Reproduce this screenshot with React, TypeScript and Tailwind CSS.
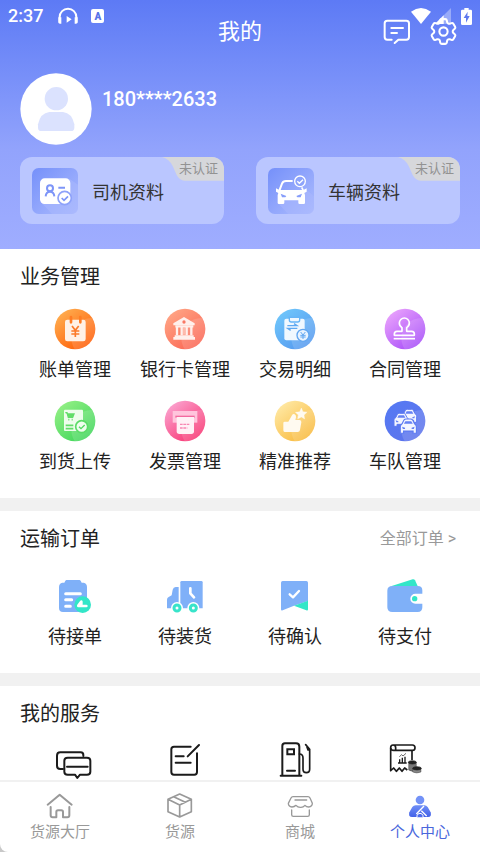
import { ReactNode } from "react";
import { HiOutlineCog6Tooth } from "react-icons/hi2";

interface MenuItem {
  label: string;
  icon: ReactNode;
}

const Disc = ({ id, from, to, children }: { id: string; from: string; to: string; children: ReactNode }) => (
  <svg viewBox="0 0 126 126" className="size-[42px]" aria-hidden="true">
    <defs>
      <linearGradient id={id} x1="0.1" y1="0.1" x2="0.8" y2="0.95">
        <stop offset="0" stopColor={from} />
        <stop offset="1" stopColor={to} />
      </linearGradient>
      <clipPath id={`${id}-clip`}>
        <circle cx="63" cy="63" r="61" />
      </clipPath>
    </defs>
    <circle cx="63" cy="63" r="61" fill={`url(#${id})`} />
    <circle cx="112" cy="90" r="60" fill="#fff" opacity="0.14" clipPath={`url(#${id}-clip)`} />
    {children}
  </svg>
)

const SmallCar = ({ x, y, scale }: { x: number; y: number; scale: number }) => (
  <g transform={`translate(${x} ${y}) scale(${scale})`}>
    <path d="M-22 1C-22-3-20-5-17-7L-12-17Q-10-20-6-20H6Q10-20 12-17L17-7C20-5 22-3 22 1V19H13V13H-13V19H-22Z" fill="#f4f6ff" stroke="#5c7af2" strokeWidth="3" />
    <path d="M-12-7L-8-14H8L12-7Z" fill="#6481f3" />
    <path d="M-17 1L-9 4V7H-15ZM17 1L9 4V7H15Z" fill="#6481f3" />
  </g>
)

const business: MenuItem[] = [
  {
    label: "账单管理",
    icon: (
      <Disc id="bill" from="#ffae50" to="#ff5c05">
        <rect x="33" y="35" width="62" height="65" rx="7" fill="#fff1e6" />
        <path d="M51 27V43M79 27V43" stroke="#ff7d24" strokeWidth="8" strokeLinecap="round" />
        <path d="M54 54L64 67L74 54M64 67V87M52 69H76M52 78H76" fill="none" stroke="#fb7a2a" strokeWidth="5" />
      </Disc>
    )
  },
  {
    label: "银行卡管理",
    icon: (
      <Disc id="bank" from="#ffa585" to="#fb6553">
        <path d="M60 27L92 46V52H28V46Z" fill="#fff0ec" strokeLinejoin="round" />
        <circle cx="60" cy="42" r="5" fill="#f97864" />
        <path d="M34 55H88M39 55V82M53 55V82M68 55V82M82 55V82" stroke="#fff0ec" strokeWidth="7" />
        <path d="M60 58V80" stroke="#ffd0c4" strokeWidth="4" />
        <path d="M32 82H89V87H93V95H28V87H32Z" fill="#fff0ec" />
      </Disc>
    )
  },
  {
    label: "交易明细",
    icon: (
      <Disc id="trade" from="#6fc6fb" to="#5599ef">
        <rect x="31" y="32" width="61" height="65" rx="6" fill="#f0f8ff" />
        <path d="M46 28H77V36Q77 42 71 42H52Q46 42 46 36Z" fill="#eef7ff" stroke="#65b4f6" strokeWidth="4" />
        <path d="M40 53H69L60 47M70 61H41L50 67" fill="none" stroke="#5fa9f2" strokeWidth="4" />
        <circle cx="87" cy="82" r="18" fill="#e8f3ff" stroke="#62a7f1" strokeWidth="4" />
        <path d="M80 72L87 81L94 72M87 81V93M79 82H95M79 87H95" fill="none" stroke="#62a7f1" strokeWidth="3" />
      </Disc>
    )
  },
  {
    label: "合同管理",
    icon: (
      <Disc id="contract" from="#e9a2fc" to="#a74cf9">
        <path d="M54 59Q46 54 46 45A15 15 0 0 1 76 45Q76 54 68 59V70H83Q91 70 91 78V82H31V78Q31 70 39 70H54Z" fill="none" stroke="#fff" strokeWidth="5" strokeLinejoin="round" />
        <path d="M29 92H93" stroke="#fff" strokeWidth="5" />
      </Disc>
    )
  },
  {
    label: "到货上传",
    icon: (
      <Disc id="arrival" from="#93ef85" to="#3fd65a">
        <rect x="30" y="29" width="57" height="64" rx="3" fill="#eefdec" />
        <path d="M34 38H39L43 52H56L60 42H41" fill="#62dd68" stroke="#62dd68" strokeWidth="4" />
        <path d="M43 59H46M53 59H56" stroke="#62dd68" strokeWidth="5" />
        <path d="M35 76H58M35 86H58" stroke="#62dd68" strokeWidth="5" />
        <circle cx="83" cy="80" r="18" fill="#effeee" stroke="#5bdc67" strokeWidth="5" />
        <path d="M75 80L81 86L92 75" fill="none" stroke="#52d861" strokeWidth="4" />
      </Disc>
    )
  },
  {
    label: "发票管理",
    icon: (
      <Disc id="invoice" from="#fba3cf" to="#f83371">
        <path d="M26 33H100V68H26Z" fill="#ffc5dc" />
        <path d="M34 50H92" stroke="#f3699f" strokeWidth="6" />
        <path d="M38 51H90V94Q90 102 82 102H46Q38 102 38 94Z" fill="#fff1f6" />
        <path d="M48 73H78M48 84H70" stroke="#f787b2" strokeWidth="4" strokeDasharray="8 2" />
      </Disc>
    )
  },
  {
    label: "精准推荐",
    icon: (
      <Disc id="recommend" from="#ffe9a5" to="#f9b93b">
        <path d="M32 65H43L54 46Q57 40 62 43Q67 46 66 52L64 60H77Q83 61 82 67L78 90Q77 96 71 96H32Q28 96 28 91V69Q28 65 32 65Z" fill="#fffaf0" />
        <path d="M82 24L87 35L99 37L90 45L92 57L82 51L71 57L73 45L64 37L77 35Z" fill="#fffaf0" stroke="#fffaf0" strokeLinejoin="round" />
      </Disc>
    )
  },
  {
    label: "车队管理",
    icon: (
      <Disc id="fleet" from="#5579f3" to="#5d74ec">
        <SmallCar x={76} y={48} scale={1} />
        <SmallCar x={52} y={60} scale={1} />
        <SmallCar x={73} y={79} scale={1.1} />
      </Disc>
    )
  }
]

const orders: MenuItem[] = [
  {
    label: "待接单",
    icon: (
      <svg viewBox="0 0 120 120" className="size-10" aria-hidden="true">
        <path d="M34 9H74Q77 9 80 17H86Q96 19 96 30V93Q96 105 84 105H24Q12 105 12 93V30Q12 19 22 17H28Q31 9 34 9Z" fill="#7fb0f8" />
        <path d="M32 50H76M32 68H50M32 88H46" stroke="#fff" strokeWidth="9" strokeLinecap="round" />
        <circle cx="83" cy="83" r="25" fill="#33e6c8" />
        <path d="M70 87H94M70 86L79 74V82" fill="none" stroke="#fff" strokeWidth="8" strokeLinecap="round" strokeLinejoin="round" />
      </svg>
    )
  },
  {
    label: "待装货",
    icon: (
      <svg viewBox="0 0 120 120" className="size-10" aria-hidden="true">
        <path d="M50 12H109Q113 12 113 16V94H46V16Q46 12 50 12Z" fill="#7fb0f8" />
        <path d="M41 30V94H6V68Q6 62 11 60L20 55L23 38Q25 30 32 30Z" fill="#7fb0f8" />
        <path d="M76 34V49L87 61" fill="none" stroke="#fff" strokeWidth="8" strokeLinecap="round" strokeLinejoin="round" />
        <circle cx="36" cy="93" r="18" fill="#fff" />
        <circle cx="85" cy="93" r="18" fill="#fff" />
        <circle cx="36" cy="93" r="9" fill="none" stroke="#38e4ca" strokeWidth="9" />
        <circle cx="85" cy="93" r="9" fill="none" stroke="#38e4ca" strokeWidth="9" />
      </svg>
    )
  },
  {
    label: "待确认",
    icon: (
      <svg viewBox="0 0 120 120" className="size-10" aria-hidden="true">
        <path d="M23 12H94Q99 12 99 17V72L57 86L23 100Q18 102 18 97V17Q18 12 23 12Z" fill="#7fb0f8" />
        <path d="M99 71V97Q99 102 94 100L57 86Z" fill="#33e6c8" />
        <path d="M44 52L54 61L72 42" fill="none" stroke="#fff" strokeWidth="7" strokeLinecap="round" strokeLinejoin="round" />
      </svg>
    )
  },
  {
    label: "待支付",
    icon: (
      <svg viewBox="0 0 120 120" className="size-10" aria-hidden="true">
        <path d="M20 27L83 7Q88 6 90 10L99 29H20Z" fill="#33e6c8" />
        <path d="M22 27H98Q112 27 112 40V50H91A15 15 0 0 0 91 80H112V91Q112 105 98 105H22Q7 105 7 91V41Q7 27 22 27Z" fill="#7fb0f8" />
        <circle cx="89" cy="65" r="8" fill="#33e6c8" />
      </svg>
    )
  }
]

const services: MenuItem[] = [
  {
    label: "消息",
    icon: (
      <svg viewBox="0 0 120 120" className="size-10" fill="none" stroke="#1b1b1b" strokeWidth="6" strokeLinejoin="round" strokeLinecap="round" aria-hidden="true">
        <path d="M85 48V45Q85 37 77 37H16Q6 37 6 47V77Q6 87 16 87H24" />
        <path d="M38 53H96Q106 53 106 62V95Q106 104 96 104H75L67 114L60 104H38Q28 104 28 95V62Q28 53 38 53Z" />
        <path d="M36 80H98" />
      </svg>
    )
  },
  {
    label: "记录",
    icon: (
      <svg viewBox="0 0 120 120" className="size-10" fill="none" stroke="#1b1b1b" strokeWidth="6" strokeLinecap="round" aria-hidden="true">
        <path d="M77 20H27Q19 20 19 28V96Q19 104 27 104H88Q96 104 96 96V40" />
        <path d="M102 15L68 49M32 49H56M32 68H77" />
      </svg>
    )
  },
  {
    label: "加油",
    icon: (
      <svg viewBox="0 0 120 120" className="size-10" fill="none" stroke="#1b1b1b" strokeWidth="6" strokeLinecap="round" aria-hidden="true">
        <path d="M22 106V18Q22 10 30 10H63Q73 10 73 20V106M17 107H79M36 92H60" />
        <path d="M37 28H57V43H37Z" />
        <path d="M73 42Q84 42 84 54V88Q84 98 94 98Q104 98 104 88V28L92 14M94 16L99 30H104" strokeWidth="5" />
      </svg>
    )
  },
  {
    label: "账目",
    icon: (
      <svg viewBox="0 0 120 120" className="size-10" fill="none" stroke="#1b1b1b" strokeWidth="5" strokeLinejoin="round" aria-hidden="true">
        <path d="M17 24V92L26 84L34 94L43 84L51 94L59 84L67 90M81 30V60" />
        <path d="M24 15H82Q90 15 90 23Q90 31 82 31H32V23Q32 15 24 15Q17 15 17 23Q17 31 26 31H34" />
        <path d="M39 69H65M44 68V58M52 68V53M60 68V50" strokeWidth="4" />
        <path d="M43 50L50 44L54 48L63 40" strokeWidth="2" />
        <path d="M71 67V90Q82 98 94 90V67Z" fill="#777" strokeWidth="1" />
        <ellipse cx="82" cy="67" rx="12" ry="5" fill="#222" strokeWidth="2" />
        <path d="M83 85V96Q95 102 108 96V85Z" fill="#888" strokeWidth="1" />
        <ellipse cx="96" cy="85" rx="13" ry="5" fill="#222" strokeWidth="2" />
      </svg>
    )
  }
]

const tabs = [
  {
    label: "货源大厅",
    active: false,
    icon: (
      <svg viewBox="0 0 84 84" className="size-7" fill="none" stroke="#999" strokeWidth="6" strokeLinecap="round" strokeLinejoin="round" aria-hidden="true">
        <path d="M5 38L41 8L77 38" />
        <path d="M14 45V70Q14 76 20 76H31V60Q31 55 36 55H46Q51 55 51 60V76H64Q70 76 70 70V45" />
      </svg>
    )
  },
  {
    label: "货源",
    active: false,
    icon: (
      <svg viewBox="0 0 84 84" className="size-7" fill="none" stroke="#999" strokeWidth="5" strokeLinejoin="round" aria-hidden="true">
        <path d="M41 6L76 22V59L41 75L6 59V22ZM6 22L41 39L76 22M41 39V75M23 14L58 31" />
      </svg>
    )
  },
  {
    label: "商城",
    active: false,
    icon: (
      <svg viewBox="0 0 84 84" className="size-7" fill="none" stroke="#999" strokeWidth="4" strokeLinecap="round" strokeLinejoin="round" aria-hidden="true">
        <path d="M21 14H66Q70 14 72 18L79 34Q79 44 68 45Q61 45 57 40Q51 47 43 46Q35 46 30 40Q25 45 18 45Q7 44 7 34L15 18Q17 14 21 14ZM27 24H62" />
        <path d="M17 54V68Q17 73 22 73H65Q70 73 70 68V54" />
      </svg>
    )
  },
  {
    label: "个人中心",
    active: true,
    icon: (
      <svg viewBox="0 0 84 84" className="size-7" aria-hidden="true">
        <defs>
          <linearGradient id="me" x1="0" y1="0" x2="0" y2="1">
            <stop offset="0" stopColor="#6f8ef6" />
            <stop offset="1" stopColor="#4362e8" />
          </linearGradient>
        </defs>
        <circle cx="42" cy="24" r="13" fill="#7392f7" />
        <path d="M29 40H55Q61 40 65 45L74 61Q78 75 66 75H18Q6 75 10 61L19 45Q23 40 29 40Z" fill="url(#me)" />
        <path d="M54 42L31 66M46 56L62 72" stroke="#fff" strokeWidth="4" />
        <path d="M33 76V71Q35 64 42 64Q49 64 51 71V76" fill="#4c6bec" stroke="#fff" strokeWidth="3" />
      </svg>
    )
  }
]

const DriverIcon = () => (
  <svg viewBox="0 0 138 138" className="size-[46px] shrink-0" aria-hidden="true">
    <defs>
      <linearGradient id="tile" x1="0" y1="0" x2="1" y2="1">
        <stop offset="0" stopColor="#7590fa" />
        <stop offset="1" stopColor="#adbcfe" />
      </linearGradient>
    </defs>
    <rect width="138" height="138" rx="20" fill="url(#tile)" />
    <path d="M28 104L60 138H118Q138 138 138 118V50L112 32Z" fill="#a9b8fe" opacity="0.55" />
    <rect x="24" y="31" width="91" height="77" rx="14" fill="#fff" />
    <circle cx="54" cy="61" r="9" fill="none" stroke="#7d95f8" strokeWidth="6" />
    <path d="M41 85Q42 71 54 71Q66 71 67 85M79 59H99" fill="none" stroke="#7d95f8" strokeWidth="6" />
    <circle cx="98" cy="90" r="20" fill="#fff" stroke="#8ea2fa" strokeWidth="5" />
    <path d="M89 90L96 97L108 85" fill="none" stroke="#7d95f8" strokeWidth="5" />
  </svg>
)

const VehicleIcon = () => (
  <svg viewBox="0 0 138 138" className="size-[46px] shrink-0" aria-hidden="true">
    <rect width="138" height="138" rx="20" fill="url(#tile)" />
    <path d="M28 104L60 138H118Q138 138 138 118V84L116 66Z" fill="#a9b8fe" opacity="0.5" />
    <path d="M74 39H54Q45 39 42 47L34 68" fill="none" stroke="#fff" strokeWidth="6" />
    <path d="M24 61L34 66H106L116 61V71L109 75Q112 80 111 88V105Q111 108 107 108H95Q91 108 91 104V97H49V104Q49 108 45 108H33Q29 108 29 105V88Q28 80 31 75L24 71Z" fill="#fff" />
    <path d="M38 77L55 84L52 88H42ZM102 77L85 84L88 88H98Z" fill="#869dfa" />
    <circle cx="96" cy="40" r="16" fill="#8da3fb" stroke="#fff" strokeWidth="4" />
    <path d="M88 40L94 46L105 35" fill="none" stroke="#fff" strokeWidth="4" />
    <path d="M101 58L106 68" stroke="#fff" strokeWidth="5" />
  </svg>
)

const ProfileCard = ({ label, icon }: MenuItem) => (
  <button className="relative flex h-[67px] flex-1 items-center gap-3.5 overflow-hidden rounded-xl bg-[#bac6ff] pl-3 text-lg text-[#333]">
    {icon}
    <span className="pt-1">{label}</span>
    <span className="absolute top-0 right-0 flex h-6 w-[62px] items-center justify-end pr-1.5 text-[13px] text-[#929292]">
      <svg viewBox="0 0 186 72" className="absolute inset-0 size-full" aria-hidden="true">
        <path d="M0 0H186V71H68Q52 70 44 54L32 27Q22 6 0 0Z" fill="#d6d7db" />
      </svg>
      <span className="relative">未认证</span>
    </span>
  </button>
)

const StatusBar = () => (
  <div className="pointer-events-none absolute inset-x-0 top-0 flex h-8 items-center pr-2 pl-2 text-white">
    <span className="text-lg font-medium">2:37</span>
    <svg viewBox="0 0 66 54" className="ml-3.5 h-[18px] w-[22px]" aria-hidden="true">
      <path d="M8 48V30A25 25 0 0 1 58 30V48" fill="none" stroke="#fff" strokeWidth="6" />
      <path d="M4 31H13V50H9Q4 50 4 44ZM62 31H53V50H57Q62 50 62 44ZM29 27L44 37L29 47Z" fill="#fff" />
    </svg>
    <span className="ml-3 flex h-3.5 w-[13px] items-center justify-center rounded-xs bg-white text-[10px] font-black text-[#5872e8]">A</span>
    <svg viewBox="0 0 60 48" className="ml-auto h-4 w-5" fill="#fff" aria-hidden="true">
      <path d="M0 11Q30-11 60 11L30 48Z" />
    </svg>
    <svg viewBox="0 0 48 48" className="ml-1 size-4" fill="#fff" aria-hidden="true">
      <path d="M48 0V48H0Z" opacity="0.35" />
      <path d="M26 22V48H0Z" />
    </svg>
    <svg viewBox="0 0 33 51" className="ml-2.5 h-[17px] w-[11px]" aria-hidden="true">
      <path d="M10 0H23V5H29Q33 5 33 9V47Q33 51 29 51H4Q0 51 0 47V9Q0 5 4 5H10Z" fill="#fff" />
      <path d="M20 11L8 30H15V44L26 24H19Z" fill="#5f79ee" />
    </svg>
  </div>
)

const IconGrid = ({ items, className }: { items: MenuItem[]; className?: string }) => (
  <div className={`grid grid-cols-4 ${className ?? ""}`}>
    {items.map((item) => (
      <button key={item.label} className="flex flex-col items-center gap-1.5 text-lg leading-7 whitespace-nowrap">
        {item.icon}
        {item.label}
      </button>
    ))}
  </div>
)

const App = () => {
  return (
    <div className="flex min-h-screen flex-col bg-[#c8c8c8] font-[Roboto,'Noto_Sans_CJK_SC',sans-serif] text-[#222]">
      <header className="relative bg-linear-to-b from-[#5d7af5] via-[#92a3fc] via-60% to-[#9fadff] px-5 pb-[25px] text-white">
        <StatusBar />
        <div className="flex h-[62px] items-center">
          <div className="flex-1" />
          <h1 className="text-[22px]">我的</h1>
          <div className="flex flex-1 items-center justify-end gap-4">
            <button aria-label="消息">
              <svg viewBox="0 0 84 84" className="size-7" fill="none" stroke="#fff" strokeWidth="6" strokeLinecap="round" strokeLinejoin="round" aria-hidden="true">
                <path d="M26 68H13Q5 68 5 60V19Q5 11 13 11H70Q78 11 78 19V60Q78 68 70 68H46L35 78M25 33H60M25 48H42" />
              </svg>
            </button>
            <button aria-label="设置">
              <HiOutlineCog6Tooth size={33} />
            </button>
          </div>
        </div>
        <div className="mt-[11px] flex gap-2.5">
          <svg viewBox="0 0 216 216" className="size-[72px]" aria-hidden="true">
            <circle cx="108" cy="108" r="107" fill="#fff" />
            <circle cx="109" cy="77" r="35" fill="#dbe2fe" />
            <path d="M88 117H129Q156 120 163 154V164Q163 174 153 174H64Q54 174 54 164V154Q61 120 88 117Z" fill="#dbe2fe" />
          </svg>
          <p className="mt-3 text-xl font-medium">180****2633</p>
        </div>
        <div className="mt-3 flex gap-8">
          <ProfileCard label="司机资料" icon={<DriverIcon />} />
          <ProfileCard label="车辆资料" icon={<VehicleIcon />} />
        </div>
      </header>

      <main className="flex flex-1 flex-col gap-[13px] bg-[#f1f1f1]">
        <section className="bg-white px-5 pt-3 pb-[22px]">
          <h2 className="text-xl leading-8">业务管理</h2>
          <IconGrid items={business} className="mt-[15px] gap-y-4" />
        </section>

        <section className="bg-white px-5 pt-3 pb-[22px]">
          <div className="flex items-center justify-between">
            <h2 className="text-xl leading-8">运输订单</h2>
            <a href="#orders" className="pr-1 text-base text-[#999]">全部订单 &gt;</a>
          </div>
          <IconGrid items={orders} className="mt-[22px]" />
        </section>

        <section className="flex-1 bg-white px-5 pt-3">
          <h2 className="text-xl leading-8">我的服务</h2>
          <div className="mt-2.5 grid grid-cols-4">
            {services.map((item) => (
              <button key={item.label} aria-label={item.label} className="flex justify-center">
                {item.icon}
              </button>
            ))}
          </div>
        </section>
      </main>

      <nav className="sticky bottom-0 grid h-[72px] grid-cols-4 rounded-bl-lg border-t-2 border-[#f1f1f1] bg-white">
        {tabs.map((tab) => (
          <a
            key={tab.label}
            href="#tab"
            className={`flex flex-col items-center pt-2.5 text-[15px] leading-6 ${tab.active ? "text-[#4a67dc]" : "text-[#999]"}`}
          >
            {tab.icon}
            {tab.label}
          </a>
        ))}
      </nav>
    </div>
  )
}

export default App
